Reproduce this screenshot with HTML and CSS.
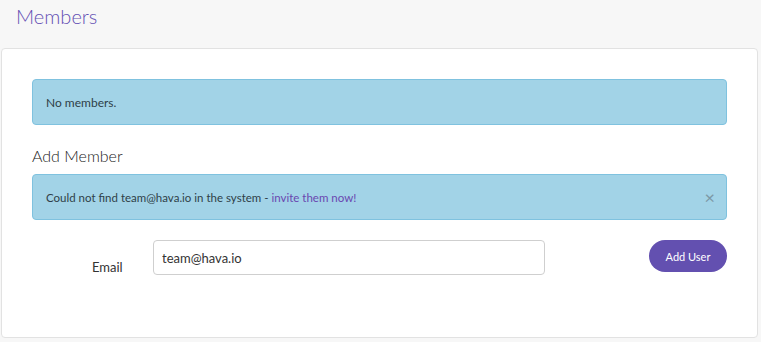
FILE: index.html
```html
<!DOCTYPE html>
<html lang="en">
<head>
    <meta charset="UTF-8">
    <title>Members</title>
    <link rel="stylesheet" href="styles.css">
</head>
<body>
    <div class="page-header">
        <h1>Members</h1>
    </div>
    <div class="panel">
        <div class="alert">No members.</div>
        <h3>Add Member</h3>
        <div class="alert alert-dismiss">
            <span>Could not find team@hava.io in the system - <a href="#">invite them now!</a></span>
            <span class="close">&times;</span>
        </div>
        <form class="member-form">
            <label for="email">Email</label>
            <input type="email" id="email" value="team@hava.io">
            <button type="button">Add User</button>
        </form>
    </div>
</body>
</html>
```

FILE: styles.css
```css
body {
    margin: 0;
    font-family: Lato, "Open Sans", sans-serif;
    background-color: #f7f7f7;
    color: #333;
}
.page-header {
    height: 48px;
    padding: 0 16px;
}
.page-header h1 {
    margin: 0;
    padding-top: 4px;
    font-size: 20px;
    font-weight: 300;
    color: #6450b4;
}
.panel {
    margin: 0 3px 0 1px;
    height: 258px;
    padding: 30px 30px 0 30px;
    background: white;
    border: 1px solid #e2e2e2;
    border-radius: 4px;
}
.alert {
    display: flex;
    align-items: center;
    justify-content: space-between;
    height: 44px;
    padding: 0 13px;
    background: #a2d3e7;
    border: 1px solid #7fc2df;
    border-radius: 4px;
    font-size: 12px;
    color: #2f3f48;
}
.alert a {
    color: #6a47b0;
    text-decoration: none;
}
.alert-dismiss {
    font-size: 11.5px;
}
.close {
    font-size: 18px;
    color: #7c98a6;
    margin-right: -2px;
}
h3 {
    margin: 21px 0 9px;
    font-size: 16px;
    font-weight: 300;
    color: #222;
}
.member-form {
    display: flex;
    align-items: flex-start;
    margin-top: 20px;
}
.member-form label {
    width: 121px;
    padding: 19px 0 0 60px;
    box-sizing: border-box;
    font-size: 13px;
    color: #333;
}
.member-form input {
    width: 392px;
    height: 35px;
    box-sizing: border-box;
    padding: 0 8px;
    border: 1px solid #cfcfcf;
    border-radius: 4px;
    font-family: inherit;
    font-size: 13px;
    color: #333;
}
.member-form button {
    margin-left: auto;
    width: 78px;
    height: 32px;
    background-color: #6350b0;
    color: white;
    border: none;
    border-radius: 16px;
    font-family: inherit;
    font-size: 11px;
    cursor: pointer;
}
```
